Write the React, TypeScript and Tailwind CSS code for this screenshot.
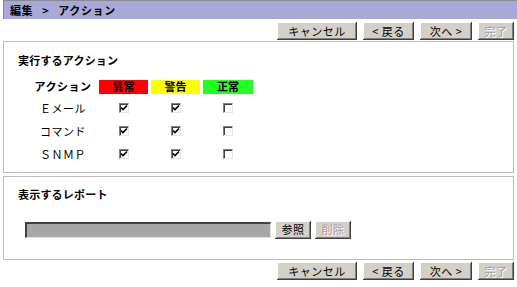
import React from 'react';

const font = "font-['MS_UI_Gothic','Noto_Sans_CJK_JP',sans-serif]";

const btnBase =
  'h-[18px] flex items-center justify-center bg-[#d4d0c8] text-[11px] leading-none shadow-[inset_-1px_-1px_#404040,inset_1px_1px_#ffffff,inset_-2px_-2px_#808080]';

const WinButton: React.FC<{ label: string; width: string; disabled?: boolean }> = ({ label, width, disabled }) => (
  <button
    type="button"
    className={`${btnBase} ${width} tracking-[0.5px] ${disabled ? 'text-[#a0a0a0] [text-shadow:1px_1px_0_#ffffff]' : 'text-black'}`}
  >
    {label}
  </button>
);

const ButtonBar: React.FC = () => (
  <div className="flex justify-end gap-[6px] pr-[3px]">
    <WinButton label="キャンセル" width="w-[80px]" />
    <WinButton label="< 戻る" width="w-[51px]" />
    <WinButton label="次へ >" width="w-[52px]" />
    <WinButton label="完了" width="w-[36px]" disabled />
  </div>
);

const Check: React.FC<{ checked?: boolean }> = ({ checked }) => (
  <span className="w-[10px] h-[10px] bg-white border-t border-l border-[#808080] border-b border-r border-b-[#e4e4e4] border-r-[#e4e4e4] shadow-[inset_1px_1px_#404040] flex items-center justify-center">
    {checked && (
      <svg width="8" height="8" viewBox="0 0 8 8">
        <path d="M1 3.5 L3 5.5 L7 1.5" stroke="#000" strokeWidth="1.6" fill="none" />
      </svg>
    )}
  </span>
);

const rows: { name: string; checks: boolean[] }[] = [
  { name: 'Ｅメール', checks: [true, true, false] },
  { name: 'コマンド', checks: [true, true, false] },
  { name: 'ＳＮＭＰ', checks: [true, true, false] },
];

export default function App() {
  return (
    <div className={`w-[517px] h-[287px] bg-white pl-[3px] overflow-hidden ${font} text-[11px] text-black`}>
      {/* title bar */}
      <div className="h-[19px] bg-[#a9a9d9] border-t border-l border-[#8a8a8a] flex items-center pl-[6px] font-bold text-[11px] tracking-[0.6px]">
        <span>編集</span>
        <span className="mx-[9px]">&gt;</span>
        <span>アクション</span>
      </div>

      <div className="mt-[3px]">
        <ButtonBar />
      </div>

      {/* actions panel */}
      <div className="mt-[1px] mr-[3px] h-[132px] border border-[#bcbcbc] pt-[10px] pl-[14px]">
        <div className="font-bold tracking-[0.2px]">実行するアクション</div>
        <div className="mt-[11px] ml-[12px] grid grid-cols-[66px_49px_49px_50px] gap-x-[3px]">
          <div className="h-[14px] mb-[3px] flex items-center justify-center font-bold tracking-[0.5px]">アクション</div>
          <div className="h-[14px] mb-[3px] bg-[#ff0000] flex items-center justify-center font-bold">異常</div>
          <div className="h-[14px] mb-[3px] bg-[#ffff00] flex items-center justify-center font-bold">警告</div>
          <div className="h-[14px] mb-[3px] bg-[#22ff22] flex items-center justify-center font-bold">正常</div>
          {rows.map(r => (
            <React.Fragment key={r.name}>
              <div className="h-[23px] flex items-center justify-center tracking-[0.5px]">{r.name}</div>
              {r.checks.map((c, i) => (
                <div key={i} className="h-[23px] flex items-center justify-center">
                  <Check checked={c} />
                </div>
              ))}
            </React.Fragment>
          ))}
        </div>
      </div>

      {/* report panel */}
      <div className="mt-[3px] mr-[3px] h-[84px] border border-[#bcbcbc] pt-[9px] pl-[14px]">
        <div className="font-bold tracking-[0.2px]">表示するレポート</div>
        <div className="mt-[18px] ml-[7px] flex items-center gap-[4px]">
          <div className="w-[246px] h-[16px] bg-[#a6a6a6] border-t-2 border-l-2 border-[#404040] border-b border-r border-b-[#e0e0e0] border-r-[#e0e0e0]" />
          <WinButton label="参照" width="w-[36px]" />
          <WinButton label="削除" width="w-[36px]" disabled />
        </div>
      </div>

      <div className="mt-[2px]">
        <ButtonBar />
      </div>
    </div>
  );
}
